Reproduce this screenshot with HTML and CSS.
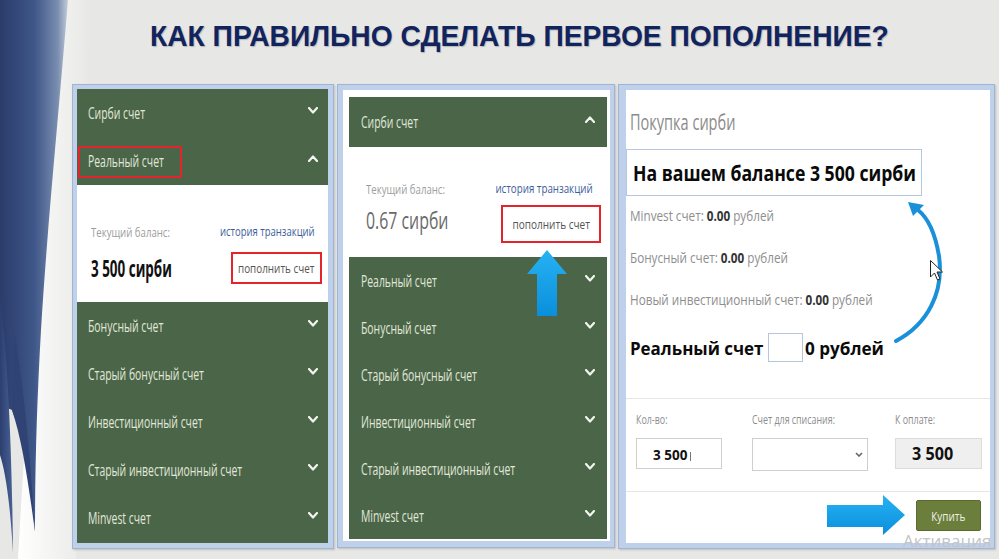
FILE: index.html
```html
<!DOCTYPE html>
<html lang="ru">
<head>
<meta charset="utf-8">
<title>Как правильно сделать первое пополнение</title>
<link rel="stylesheet" href="styles.css">
</head>
<body>
<svg class="deco" width="100" height="559" viewBox="0 0 100 559" aria-hidden="true">
  <defs>
    <linearGradient id="gBlue" x1="0" y1="0" x2="1" y2="0">
      <stop offset="0" stop-color="#2b3c6a"/>
      <stop offset="0.5" stop-color="#3e5688"/>
      <stop offset="0.85" stop-color="#7a8eb0"/>
      <stop offset="1" stop-color="#c3ccd9"/>
    </linearGradient>
    <linearGradient id="gBlade" x1="0" y1="0" x2="1" y2="0">
      <stop offset="0" stop-color="#2c3f6e"/>
      <stop offset="1" stop-color="#4a6297"/>
    </linearGradient>
    <linearGradient id="gWhite" x1="0" y1="0" x2="1" y2="0">
      <stop offset="0" stop-color="#ffffff"/>
      <stop offset="1" stop-color="#ffffff" stop-opacity="0"/>
    </linearGradient>
  </defs>
  <path d="M60 0 H92 C84 150 78 330 76 559 H18 C28 380 42 190 60 0 Z" fill="url(#gWhite)"/>
  <path d="M0 0 H68 C59 110 47 230 41 330 C37 400 35 465 35 532 C31 480 24 440 12 410 L0 405 Z" fill="url(#gBlue)"/>
  <path d="M0 300 C8 360 12 450 13 553 C10 500 5 470 0 455 Z" fill="url(#gBlade)"/>
  <path d="M14 330 C24 390 30 450 35 532 C28 480 22 440 12 410 Z" fill="#2f4474"/>
</svg>

<header class="head">
  <h1 class="title">КАК ПРАВИЛЬНО СДЕЛАТЬ ПЕРВОЕ ПОПОЛНЕНИЕ?</h1>
</header>

<main class="panels">
  <section class="frame frame-1">
    <div class="acc acc-1">
      <div class="row"><span class="lbl"><span class="t k65">Сирби счет</span></span><svg class="chev" viewBox="0 0 10 7"><polyline points="1,1 5,5.5 9,1"/></svg></div>
      <div class="row"><span class="lbl"><span class="t k65">Реальный счет</span></span><svg class="chev" viewBox="0 0 10 7"><polyline points="1,6 5,1.5 9,6"/></svg><span class="mark"></span></div>
      <div class="open open-1">
        <div class="open-top">
          <span class="cell-l"><span class="t k74 muted">Текущий баланс:</span></span>
          <span class="cell-r"><span class="t to-r k73 link">история транзакций</span></span>
        </div>
        <div class="open-bottom">
          <span class="cell-l"><span class="t k56 bal">3 500 сирби</span></span>
          <span class="topup"><span class="t to-c k76">пополнить счет</span></span>
        </div>
      </div>
      <div class="row"><span class="lbl"><span class="t k65">Бонусный счет</span></span><svg class="chev" viewBox="0 0 10 7"><polyline points="1,1 5,5.5 9,1"/></svg></div>
      <div class="row"><span class="lbl"><span class="t k65">Старый бонусный счет</span></span><svg class="chev" viewBox="0 0 10 7"><polyline points="1,1 5,5.5 9,1"/></svg></div>
      <div class="row"><span class="lbl"><span class="t k65">Инвестиционный счет</span></span><svg class="chev" viewBox="0 0 10 7"><polyline points="1,1 5,5.5 9,1"/></svg></div>
      <div class="row"><span class="lbl"><span class="t k65">Старый инвестиционный счет</span></span><svg class="chev" viewBox="0 0 10 7"><polyline points="1,1 5,5.5 9,1"/></svg></div>
      <div class="row"><span class="lbl"><span class="t k65">Minvest счет</span></span><svg class="chev" viewBox="0 0 10 7"><polyline points="1,1 5,5.5 9,1"/></svg></div>
    </div>
  </section>

  <section class="frame frame-2">
    <div class="sheet">
      <div class="acc acc-2">
        <div class="row row-head"><span class="lbl"><span class="t k65">Сирби счет</span></span><svg class="chev" viewBox="0 0 10 7"><polyline points="1,6 5,1.5 9,6"/></svg></div>
        <div class="open open-2">
          <div class="open-top">
            <span class="cell-l"><span class="t k74 muted">Текущий баланс:</span></span>
            <span class="cell-r"><span class="t to-r k75 link">история транзакций</span></span>
          </div>
          <div class="open-bottom">
            <span class="cell-l"><span class="t k69 bal-light">0.67 сирби</span></span>
            <span class="topup"><span class="t to-c k77">пополнить счет</span></span>
          </div>
        </div>
        <div class="row"><span class="lbl"><span class="t k65">Реальный счет</span></span><svg class="chev" viewBox="0 0 10 7"><polyline points="1,1 5,5.5 9,1"/></svg></div>
        <div class="row"><span class="lbl"><span class="t k65">Бонусный счет</span></span><svg class="chev" viewBox="0 0 10 7"><polyline points="1,1 5,5.5 9,1"/></svg></div>
        <div class="row"><span class="lbl"><span class="t k65">Старый бонусный счет</span></span><svg class="chev" viewBox="0 0 10 7"><polyline points="1,1 5,5.5 9,1"/></svg></div>
        <div class="row"><span class="lbl"><span class="t k65">Инвестиционный счет</span></span><svg class="chev" viewBox="0 0 10 7"><polyline points="1,1 5,5.5 9,1"/></svg></div>
        <div class="row"><span class="lbl"><span class="t k65">Старый инвестиционный счет</span></span><svg class="chev" viewBox="0 0 10 7"><polyline points="1,1 5,5.5 9,1"/></svg></div>
        <div class="row"><span class="lbl"><span class="t k65">Minvest счет</span></span><svg class="chev" viewBox="0 0 10 7"><polyline points="1,1 5,5.5 9,1"/></svg></div>
      </div>
    </div>
  </section>

  <section class="frame frame-3">
    <div class="buy">
      <div class="buy-title"><span class="t k66">Покупка сирби</span></div>
      <div class="buy-balance"><span class="t k84">На вашем балансе 3 500 сирби</span></div>
      <div class="buy-line first"><span class="t k78">Minvest счет: <b>0.00</b> рублей</span></div>
      <div class="buy-line"><span class="t k78">Бонусный счет: <b>0.00</b> рублей</span></div>
      <div class="buy-line"><span class="t k78">Новый инвестиционный счет: <b>0.00</b> рублей</span></div>
      <div class="buy-real">
        <span class="real-lbl"><span class="t k94">Реальный счет</span></span>
        <span class="real-box"></span>
        <span class="real-tail"><span class="t k95">0 рублей</span></span>
      </div>
      <div class="buy-form">
        <div class="form-grid">
          <span class="f-label"><span class="t k74">Кол-во:</span></span>
          <span class="f-label"><span class="t k74">Счет для списания:</span></span>
          <span class="f-label"><span class="t k74">К оплате:</span></span>
        </div>
        <div class="form-grid fields">
          <span class="in"><span class="t k90">3 500</span><span class="caret"></span></span>
          <span class="sel"><svg class="sel-chev" viewBox="0 0 8 5"><polyline points="1,1 4,4 7,1"/></svg></span>
          <span class="ro"><span class="t k95">3 500</span></span>
        </div>
      </div>
      <div class="buy-foot">
        <button class="btn-buy" type="button"><span class="t to-c k76">Купить</span></button>
      </div>
    </div>
  </section>
</main>

<svg class="overlay" width="999" height="559" viewBox="0 0 999 559" aria-hidden="true">
  <defs>
    <linearGradient id="gArrow" x1="0" y1="0" x2="0" y2="1">
      <stop offset="0" stop-color="#27b2f3"/>
      <stop offset="1" stop-color="#0a8fdc"/>
    </linearGradient>
  </defs>
  <polygon points="547,250 567,274 557,274 557,316 537,316 537,274 527,274" fill="url(#gArrow)"/>
  <polygon points="827,505 883,505 883,495 905,515 883,535 883,527 827,527" fill="url(#gArrow)"/>
  <path d="M896 341 C928 324 944 292 939 256 C935 232 928 218 918 210" fill="none" stroke="#1a90d8" stroke-width="4" stroke-linecap="round"/>
  <polygon points="908,202 924,205 913,216" fill="#1a90d8"/>
  <path d="M930.5 260.5 L930.5 277 L934.5 273 L937.5 280 L940 279 L937 272 L942.5 272 Z" fill="#ffffff" stroke="#222" stroke-width="1" stroke-linejoin="round"/>
</svg>

<div class="watermark">Активация</div>
</body>
</html>
```
FILE: styles.css
```css
* { box-sizing: border-box; }
html, body { margin: 0; padding: 0; }
body {
  position: relative;
  width: 999px;
  height: 559px;
  overflow: hidden;
  background: #e7e7e5;
  font-family: "Open Sans", "Liberation Sans", sans-serif;
  color: #333;
}
.deco { position: absolute; left: 0; top: 0; z-index: 0; }

.head { position: relative; z-index: 1; height: 84px; padding: 17px 0 0 150px; }
.title {
  margin: 0;
  display: inline-block;
  white-space: nowrap;
  font-family: "Liberation Sans", Arial, sans-serif;
  font-weight: 700;
  font-size: 30px;
  line-height: 38px;
  color: #11245e;
  transform: scaleX(.94);
  transform-origin: left center;
  text-shadow: 1px 1px 1px rgba(40, 40, 60, .25);
}

/* squeezed text helpers */
.t { display: inline-block; white-space: nowrap; transform-origin: left center; }
.to-r { transform-origin: right center; }
.to-c { transform-origin: center center; }
.k56 { transform: scaleX(.56); }
.k65 { transform: scaleX(.65); }
.k66 { transform: scaleX(.66); }
.k69 { transform: scaleX(.69); }
.k73 { transform: scaleX(.73); }
.k74 { transform: scaleX(.74); }
.k75 { transform: scaleX(.75); }
.k76 { transform: scaleX(.76); }
.k77 { transform: scaleX(.77); }
.k78 { transform: scaleX(.78); }
.k84 { transform: scaleX(.84); }
.k90 { transform: scaleX(.90); }
.k94 { transform: scaleX(.94); }
.k95 { transform: scaleX(.95); }

.panels {
  position: relative;
  z-index: 1;
  display: flex;
  align-items: flex-start;
  gap: 3px;
  padding-left: 72px;
}
.frame {
  background: #bfd0eb;
  border: 1px solid #a0b4d3;
  box-shadow: 1px 1px 2px rgba(0, 0, 0, .18);
}
.frame-1 { width: 262px; height: 465px; padding: 4px 5px 5px 4px; }
.frame-2 { width: 278px; height: 464px; padding: 5px 4px 6px 5px; }
.frame-3 { width: 377px; height: 465px; padding: 5px 4px 5px 7px; }

.sheet { background: #fff; padding: 7px 3px 2px 6px; }

.acc { background: #4a6548; }
.acc-1 { height: 454px; }

.row {
  position: relative;
  display: flex;
  align-items: center;
  height: 48px;
  padding: 0 10px 0 11px;
  color: #e1e7d9;
}
.acc-2 .row { height: 47px; padding: 0 12px; }
.acc-2 .row-head { height: 50px; }
.lbl { flex: 1 1 0; min-width: 0; font-size: 16px; }
.chev {
  flex: none;
  width: 10px;
  height: 7px;
  margin-top: -5px;
  fill: none;
  stroke: #f2f4ee;
  stroke-width: 2.2;
  stroke-linecap: round;
  stroke-linejoin: round;
}
.mark {
  position: absolute;
  left: 1px;
  top: 9px;
  width: 104px;
  height: 32px;
  border: 2px solid #e3242b;
}

.open { background: #fff; }
.open-1 { height: 117px; padding: 37px 6px 0 14px; }
.open-2 { height: 110px; padding: 32px 6px 0 17px; }
.open-top { display: flex; align-items: center; height: 18px; }
.open-1 .open-top { padding-right: 7px; }
.open-2 .open-top { padding-right: 8px; }
.cell-l { flex: 1 1 0; min-width: 0; }
.cell-r { flex: 1 1 0; min-width: 0; display: flex; justify-content: flex-end; }
.muted { font-size: 13px; color: #9d9d9d; }
.link { font-size: 13px; color: #3d5e9c; }
.open-bottom { display: flex; align-items: center; }
.open-1 .open-bottom { margin-top: 11px; }
.open-2 .open-bottom { margin-top: 8px; align-items: flex-start; }
.bal { font-size: 24px; font-weight: 700; color: #111; }
.bal-light { font-size: 23px; line-height: 30px; color: #6a6a6a; }
.topup {
  flex: none;
  display: flex;
  align-items: center;
  justify-content: center;
  border: 2px solid #e3242b;
  font-size: 13px;
  color: #555;
}
.open-1 .topup { width: 91px; height: 32px; }
.open-2 .topup { width: 100px; height: 38px; }

/* purchase panel */
.buy { background: #fff; height: 453px; }
.buy-title { height: 44px; padding: 18px 0 0 4px; font-size: 22px; line-height: 26px; color: #8b8b8b; }
.buy-balance {
  margin-top: 15px;
  width: 296px;
  height: 47px;
  border: 1px solid #b6c6dc;
  display: flex;
  align-items: center;
  padding-left: 6px;
  font-size: 21px;
  font-weight: 700;
  color: #0a0a0a;
}
.buy-line { margin-top: 22px; padding-left: 4px; font-size: 15px; line-height: 20px; color: #8e8e8e; }
.buy-line.first { margin-top: 9px; }
.buy-line b { color: #333; }
.buy-real {
  margin-top: 24px;
  height: 29px;
  display: flex;
  align-items: center;
  padding-left: 4px;
  font-size: 18px;
  font-weight: 700;
  color: #0b0b0b;
}
.real-lbl { flex: none; width: 132px; }
.real-box { flex: none; width: 35px; height: 29px; margin-left: 6px; border: 1px solid #b6c6dc; }
.real-tail { flex: none; margin-left: 2px; }

.buy-form {
  margin-top: 36px;
  border-top: 1px solid #e6e6e6;
  border-bottom: 1px solid #e6e6e6;
  padding: 13px 0 20px 10px;
}
.form-grid { display: grid; grid-template-columns: 116px 143px 87px; align-items: start; }
.f-label { font-size: 12px; line-height: 16px; color: #8d8d8d; }
.fields { margin-top: 10px; }
.in {
  width: 86px;
  height: 31px;
  border: 1px solid #cfcfcf;
  display: flex;
  align-items: center;
  padding-left: 16px;
  font-size: 15px;
  font-weight: 700;
  color: #111;
}
.caret { display: inline-block; width: 1px; height: 9px; margin: 5px 0 0 -1px; background: #777; }
.sel {
  width: 116px;
  height: 33px;
  border: 1px solid #cfcfcf;
  display: flex;
  align-items: center;
  justify-content: flex-end;
  padding-right: 4px;
}
.sel-chev { width: 8px; height: 5px; fill: none; stroke: #666; stroke-width: 1.6; }
.ro {
  width: 87px;
  height: 31px;
  background: #efefef;
  border: 1px solid #dcdcdc;
  display: flex;
  align-items: center;
  padding-left: 16px;
  font-size: 17px;
  font-weight: 700;
  color: #111;
}
.buy-foot { display: flex; justify-content: flex-end; padding: 8px 9px 0 0; }
.btn-buy {
  width: 65px;
  height: 31px;
  padding: 0;
  background: #6c7e3c;
  border: 1px solid #5b6b30;
  border-radius: 2px;
  color: #eef1e4;
  font-family: inherit;
  font-size: 13px;
  display: flex;
  align-items: center;
  justify-content: center;
}

.overlay { position: absolute; left: 0; top: 0; z-index: 2; pointer-events: none; }
.watermark {
  position: absolute;
  left: 903px;
  top: 529px;
  z-index: 3;
  font-size: 17px;
  line-height: 24px;
  color: #c4c4c4;
  white-space: nowrap;
}
```
